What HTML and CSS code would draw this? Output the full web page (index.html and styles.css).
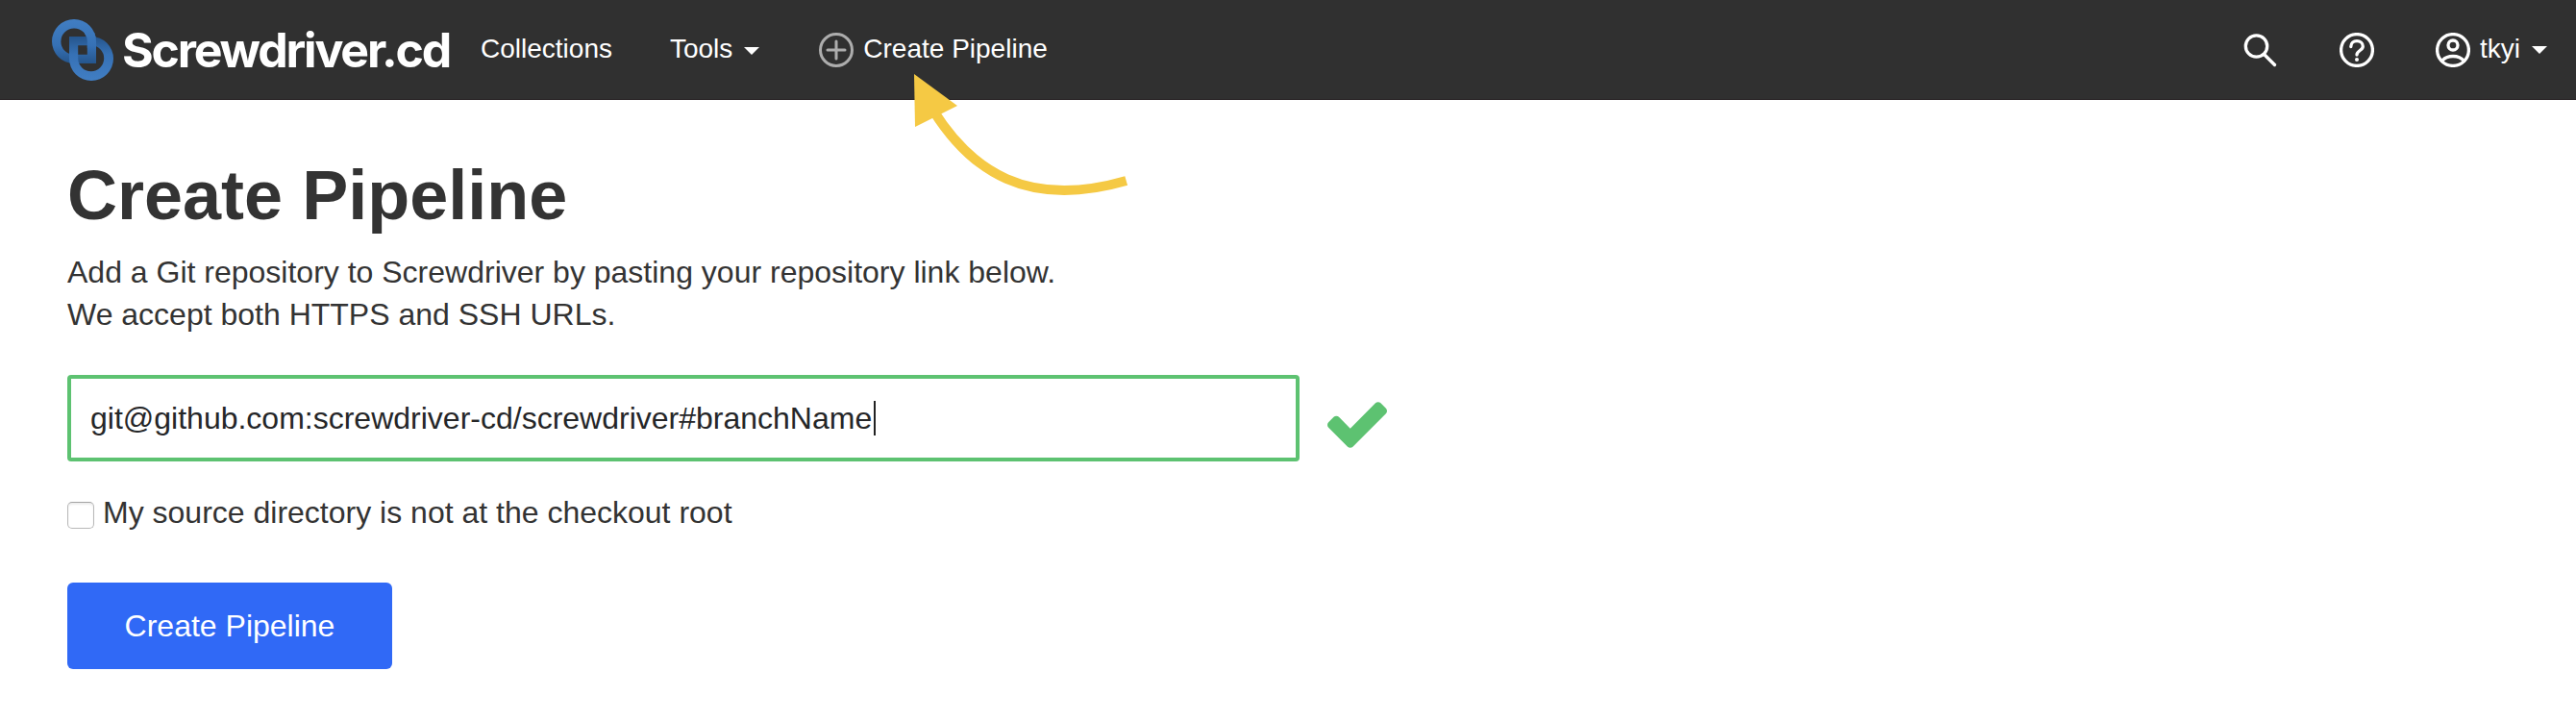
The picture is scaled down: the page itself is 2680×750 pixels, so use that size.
FILE: index.html
```html
<!DOCTYPE html>
<html lang="en">
<head>
<meta charset="utf-8">
<title>Create Pipeline - Screwdriver.cd</title>
<link rel="stylesheet" href="styles.css">
</head>
<body>
<header class="navbar">
  <a class="brand">
    <svg class="brand-mark" viewBox="0 0 64 64">
      <defs>
        <linearGradient id="ringA" x1="0" y1="0" x2="0" y2="1"><stop offset="0" stop-color="#417ec3"/><stop offset=".6" stop-color="#3671b5"/><stop offset="1" stop-color="#25558c"/></linearGradient>
        <linearGradient id="ringB" x1="0" y1="0" x2="0" y2="1"><stop offset="0" stop-color="#25558c"/><stop offset=".4" stop-color="#3671b5"/><stop offset="1" stop-color="#417ec3"/></linearGradient>
        <clipPath id="cross"><path d="M34 14h14v16H34z"/></clipPath>
      </defs>
      <path id="a" fill="url(#ringA)" fill-rule="evenodd" d="M23 0A23 23 0 0 1 46 23V46H23A23 23 0 0 1 23 0zM23 9.500A13.500 13.500 0 0 0 23 36.800H36.800V23A13.500 13.500 0 0 0 23 9.500z"/>
      <path fill="url(#ringB)" fill-rule="evenodd" d="M18 18H41A23 23 0 0 1 41 64A23 23 0 0 1 18 41zM27.200 27.200V41A13.500 13.500 0 1 0 41 27.200z"/>
      <use href="#a" clip-path="url(#cross)"/>
    </svg>
    <span class="brand-name">Screwdriver.cd</span>
  </a>
  <nav class="links">
    <a class="link">Collections</a>
    <a class="link tools">Tools<i class="caret"></i></a>
    <a class="link create">
      <svg class="icon muted" viewBox="0 0 36 36"><circle cx="18" cy="18" r="16.500"/><path d="M18 9v18M9 18h18"/></svg>
      <span>Create Pipeline</span>
    </a>
  </nav>
  <div class="actions">
    <svg class="icon" viewBox="0 0 36 36"><circle cx="13.500" cy="14" r="11.200"/><path d="M21.500 22.500L32.500 33.500"/></svg>
    <svg class="icon help" viewBox="0 0 36 36"><circle cx="18" cy="18" r="16.400"/><path d="M11.800 14.500C11.800 10.800 14.500 8.600 18 8.600S24.300 11 24.300 14.200C24.300 18.500 18 18.500 18 23"/><circle class="dot" cx="18" cy="28" r="2"/></svg>
    <a class="user">
      <svg class="icon" viewBox="0 0 36 36"><circle cx="18" cy="18" r="16.400"/><circle cx="18" cy="13" r="5"/><path d="M6.300 29.500C12 22.800 24 22.800 29.700 29.500"/></svg>
      <span>tkyi</span><i class="caret"></i>
    </a>
  </div>
</header>
<svg class="pointer" viewBox="0 0 230 140">
  <path class="pointer-line" d="M21 45C60 107 118 148 221.700 118"/>
  <path class="pointer-head" d="M1 7L46 40L2 62z"/>
</svg>
<main class="page">
  <h1 class="title">Create Pipeline</h1>
  <p class="intro">Add a Git repository to Screwdriver by pasting your repository link below.<br>We accept both HTTPS and SSH URLs.</p>
  <div class="repo">
    <div class="field"><span>git@github.com:screwdriver-cd/screwdriver#branchName</span><i class="cursor"></i></div>
    <svg class="check" viewBox="121 334 1550 1188"><path d="M1671 566q0 40-28 68l-724 724-136 136q-28 28-68 28t-68-28l-136-136-362-362q-28-28-28-68t28-68l136-136q28-28 68-28t68 28l294 295 656-657q28-28 68-28t68 28l136 136q28 28 28 68z"/></svg>
  </div>
  <label class="option"><span class="box"></span><span>My source directory is not at the checkout root</span></label>
  <button class="submit">Create Pipeline</button>
</main>
</body>
</html>
```
FILE: styles.css
```css
* { box-sizing: border-box; }
body {
  margin: 0;
  background: #fff;
  color: #333;
  font-family: "Liberation Sans", Arial, sans-serif;
  font-size: 32px;
}
.navbar {
  display: flex;
  align-items: center;
  height: 104px;
  padding: 0 30px 0 54px;
  background: #303030;
  border-bottom: 1px solid #2b2628;
  color: #fff;
  font-size: 28px;
  line-height: 32px;
  white-space: nowrap;
}
.brand { display: flex; align-items: center; width: 446px; }
.brand-mark { width: 64px; height: 64px; margin-right: 9px; }
.brand-name {
  font-family: Inter, sans-serif;
  font-size: 50px;
  font-weight: 700;
  letter-spacing: -2.2px;
  line-height: 60px;
}
.links { display: flex; align-items: center; }
.link, .user { display: flex; align-items: center; }
.link { height: 32px; margin-bottom: 1px; }
.tools { margin-left: 60px; }
.create { margin-left: 62px; }
.create .icon { margin: 2px 10px 0 0; }
.caret {
  border: 8px solid transparent;
  border-top-color: #fff;
  border-bottom: 0;
  margin: 3px 0 0 12px;
}
.icon {
  width: 36px;
  height: 36px;
  flex: none;
  fill: none;
  stroke: #fff;
  stroke-width: 3.3;
  stroke-linecap: round;
}
.icon .dot { fill: #fff; stroke: none; }
.muted { stroke: #adadad; stroke-width: 3; }
.actions { display: flex; align-items: center; margin-left: auto; }
.help { margin-left: 64px; }
.user { margin-left: 64px; }
.user span { margin: -2px 0 0 10px; }
.user .caret { margin: 0 0 0 12px; }
.pointer { position: absolute; left: 950px; top: 70px; width: 230px; height: 140px; }
.pointer-line { fill: none; stroke: #f5c944; stroke-width: 10; }
.pointer-head { fill: #f5c944; }
.page { padding: 58px 70px 0; }
.title { margin: 0; font-size: 72px; line-height: 82px; font-weight: 700; }
.intro { margin: 17px 0 0; line-height: 44px; }
.repo { display: flex; align-items: center; margin-top: 41px; }
.field {
  display: flex;
  align-items: center;
  width: 1282px;
  height: 90px;
  padding: 0 20px;
  border: 4px solid #5dc271;
  border-radius: 4px;
  color: #252628;
  line-height: 36px;
}
.cursor { width: 2px; height: 36px; margin-left: 2px; background: #222; }
.check { width: 62px; height: 48px; margin: 14px 0 0 29px; fill: #5dc271; }
.option { display: flex; align-items: center; height: 36px; margin-top: 35px; }
.box {
  width: 28px;
  height: 28px;
  margin: 6px 9px 0 0;
  border: 1px solid #b8b8b8;
  border-top-color: #a4a4a4;
  border-radius: 5px;
  background: #fff;
  box-shadow: inset 0 2px 2px #eee;
}
.submit {
  display: block;
  width: 338px;
  height: 90px;
  margin-top: 55px;
  padding: 0;
  border: 0;
  border-radius: 6px;
  background: #3069f6;
  color: #fff;
  font: inherit;
}
```
